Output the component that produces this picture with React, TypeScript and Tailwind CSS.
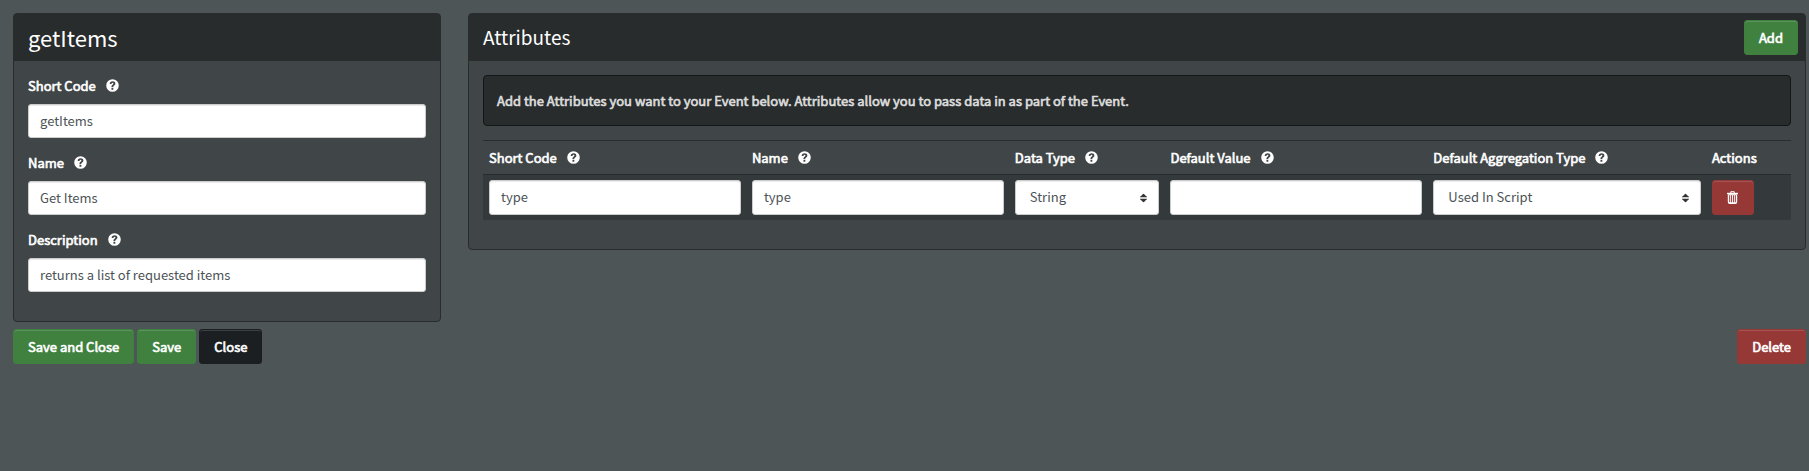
import { useState, type ReactNode } from "react";

function HelpIcon() {
  return (
    <svg viewBox="0 0 1200 1200" className="size-[13px] shrink-0" fill="currentColor" aria-hidden="true">
      <path
        fillRule="evenodd"
        d="M600 20a580 580 0 1 0 0 1160a580 580 0 0 0 0-1160zM505 1000V840h170v160zM505 750V690c0-90 50-125 105-170c45-36 75-60 75-100c0-40-30-65-80-65c-65 0-95 35-97 95H340c4-150 100-240 270-240c150 0 255 75 255 205c0 95-50 145-115 195c-50 38-75 60-75 100v40z"
      />
    </svg>
  );
}

function TrashIcon() {
  return (
    <svg viewBox="0 0 11 13" className="h-[13px] w-[11px]" fill="none" stroke="currentColor" aria-hidden="true">
      <path d="M3.8 2V.7h3.4V2" strokeWidth="1" />
      <path d="M0 2.5h11" strokeWidth="1.4" />
      <path d="M1.5 3.5v7.6q0 1.2 1.2 1.2h5.6q1.2 0 1.2-1.2V3.5" strokeWidth="1.4" />
      <path d="M3.6 4v8M5.5 4v8M7.4 4v8" strokeWidth="0.9" />
      <path d="M1.5 3.7h8M2 12h7" strokeWidth="1" />
    </svg>
  );
}

function SortIcon() {
  return (
    <svg
      viewBox="0 0 7 9"
      className="pointer-events-none absolute top-1/2 right-3 h-[9px] w-[7px] -translate-y-1/2"
      fill="#333333"
      aria-hidden="true"
    >
      <path d="M3.5 0L6.5 3H7V4H0V3H.5z" />
      <path d="M3.5 9L6.5 6H7V5H0V6H.5z" />
      <path d="M0 4h7v1H0z" fill="#ffffff" />
    </svg>
  );
}

const strong = "font-normal [-webkit-text-stroke:0.05em_currentColor]";

const fieldBase =
  "block w-full rounded-[3px] border border-[#cccccc] bg-white pb-[2px] text-[13px] text-[#4c5356] outline-none shadow-[inset_0_1px_1px_rgba(0,0,0,0.08)]";

const buttonTones = {
  green: "bg-[#408140] border-[#3f7f3f] shadow-[inset_0_1px_0_rgba(255,255,255,0.15)]",
  red: "bg-[#953836] border-[#953836] shadow-[inset_0_1px_0_rgba(255,255,255,0.15)]",
  black: "bg-[#1b1f21] border-[#1b1f21] shadow-[inset_0_1px_0_rgba(255,255,255,0.15)]",
};

function Button({ tone, children, label }: { tone: keyof typeof buttonTones; children: ReactNode; label?: string }) {
  return (
    <button
      type="button"
      aria-label={label}
      className={`flex h-[35px] min-w-[42px] items-center justify-center rounded-[3px] border px-[14px] text-[13px] text-white ${strong} ${buttonTones[tone]}`}
    >
      {children}
    </button>
  );
}

function Panel({ title, action, children }: { title: ReactNode; action?: ReactNode; children: ReactNode }) {
  return (
    <section className="rounded border border-[#282c2d] bg-[#404547]">
      <header className="flex h-[47px] items-center justify-between bg-[#282c2d] pr-[7px] pl-[14px]">
        {title}
        {action}
      </header>
      <div className="px-[14px] pt-[14px] pb-[29px]">{children}</div>
    </section>
  );
}

function Field({ id, label, value }: { id: string; label: string; value: string }) {
  return (
    <div>
      <label htmlFor={id} className={`mb-2 flex h-[21px] items-center gap-[10px] text-[13px] ${strong}`}>
        {label}
        <HelpIcon />
      </label>
      <input id={id} defaultValue={value} className={`${fieldBase} h-[34px] px-[11px]`} />
    </div>
  );
}

function Select({ label, options }: { label: string; options: string[] }) {
  const [value, setValue] = useState(options[0]);
  return (
    <div className="relative">
      <select
        aria-label={label}
        value={value}
        onChange={(e) => setValue(e.target.value)}
        className={`${fieldBase} h-[35px] appearance-none pr-7 pl-[14px]`}
      >
        {options.map((option) => (
          <option key={option}>{option}</option>
        ))}
      </select>
      <SortIcon />
    </div>
  );
}

const columns = [
  { label: "Short Code", help: true, width: "w-[20.1%]" },
  { label: "Name", help: true, width: "w-[20.1%]" },
  { label: "Data Type", help: true, width: "w-[11.9%]" },
  { label: "Default Value", help: true, width: "w-[20.1%]" },
  { label: "Default Aggregation Type", help: true, width: "w-[21.3%]" },
  { label: "Actions", help: false, width: "w-[6.5%]" },
];

const cell = "pt-[5px] pb-[5px] pr-[5px] pl-[6px]";

export default function App() {
  return (
    <main className="min-h-screen bg-[#4d5556] pt-[13px] pr-[3px] pl-[13px] font-['Noto_Sans_CJK_JP','Noto_Sans_CJK_SC',sans-serif] text-[13px] leading-5 text-white">
      <div className="grid grid-cols-12 items-start gap-x-[27px]">
        <div className="col-span-3">
          <Panel title={<h1 className="pb-[2px] text-[22px] leading-7">getItems</h1>}>
            <form className="flex flex-col gap-[14px]">
              <Field id="event-code" label="Short Code" value="getItems" />
              <Field id="event-name" label="Name" value="Get Items" />
              <Field id="event-description" label="Description" value="returns a list of requested items" />
            </form>
          </Panel>
        </div>

        <div className="col-span-9">
          <Panel
            title={<h2 className="pb-[2px] text-[19px] leading-7">Attributes</h2>}
            action={<Button tone="green">Add</Button>}
          >
            <p className={`mb-[14px] rounded border border-[#131617] bg-[#282c2d] px-[13px] py-[14px] leading-[21px] text-[#dddddd] ${strong}`}>
              Add the Attributes you want to your Event below. Attributes allow you to pass data in as part of the Event.
            </p>
            <table className="w-full table-fixed border-collapse">
              <thead>
                <tr className="h-[34px] border-y border-[#282c2d]">
                  {columns.map((column) => (
                    <th key={column.label} className={`${column.width} pl-[6px] text-left ${strong}`}>
                      <span className="flex items-center gap-[10px] whitespace-nowrap">
                        {column.label}
                        {column.help && <HelpIcon />}
                      </span>
                    </th>
                  ))}
                </tr>
              </thead>
              <tbody>
                <tr className="bg-[#34393b]">
                  <td className={cell}>
                    <input aria-label="Short Code" defaultValue="type" className={`${fieldBase} h-[35px] px-[11px]`} />
                  </td>
                  <td className={cell}>
                    <input aria-label="Name" defaultValue="type" className={`${fieldBase} h-[35px] px-[11px]`} />
                  </td>
                  <td className={cell}>
                    <Select label="Data Type" options={["String", "Number", "Boolean"]} />
                  </td>
                  <td className={cell}>
                    <input aria-label="Default Value" className={`${fieldBase} h-[35px] px-[11px]`} />
                  </td>
                  <td className={cell}>
                    <Select label="Default Aggregation Type" options={["Used In Script", "Sum", "Count"]} />
                  </td>
                  <td className={cell}>
                    <Button tone="red" label="Delete attribute">
                      <TrashIcon />
                    </Button>
                  </td>
                </tr>
              </tbody>
            </table>
          </Panel>
        </div>
      </div>

      <footer className="mt-[7px] flex gap-[3px]">
        <Button tone="green">Save and Close</Button>
        <Button tone="green">Save</Button>
        <Button tone="black">Close</Button>
        <div className="ml-auto">
          <Button tone="red">Delete</Button>
        </div>
      </footer>
    </main>
  );
}
